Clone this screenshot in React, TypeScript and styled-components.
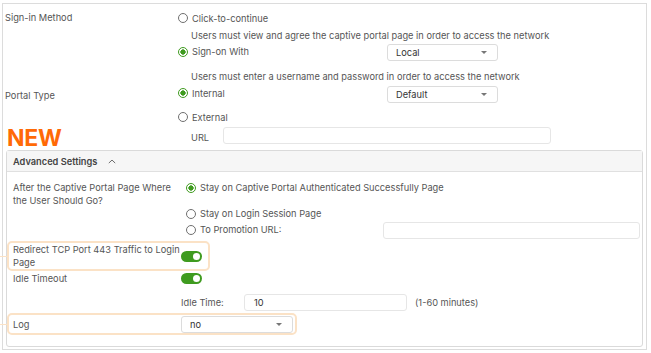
import React from "react";
import styled, { createGlobalStyle } from "styled-components";

const GlobalStyle = createGlobalStyle`
  html, body {
    margin: 0;
    padding: 0;
    background: #fff;
  }
  body {
    font-family: Inter, "Noto Sans", "Liberation Sans", sans-serif;
    font-size: 9.25px;
    color: #555;
  }
`;

const PEACH = "#fbe2c6";
const GREEN = "#3f9b1f";

const Radio: React.FC<{ checked?: boolean; label: string }> = ({ checked, label }) => (
  <RadioWrap>
    <RadioDot $checked={!!checked} />
    <span>{label}</span>
  </RadioWrap>
);

const Select: React.FC<{ value: string; width: number }> = ({ value, width }) => (
  <SelectBox style={{ width }}>
    <span>{value}</span>
    <Caret />
  </SelectBox>
);

const App: React.FC = () => {
  return (
    <>
      <GlobalStyle />
      <Frame>
        <Field>
          <Label $pt={0} $lh={18}>
            Sign-in Method
          </Label>
          <Stack>
            <Line $h={18}>
              <Radio label="Click-to-continue" />
            </Line>
            <Line $h={16}>
              <Hint>Users must view and agree the captive portal page in order to access the network</Hint>
            </Line>
            <Line $h={19}>
              <RadioCell>
                <Radio checked label="Sign-on With" />
              </RadioCell>
              <Select value="Local" width={111} />
            </Line>
            <Line $h={18} $mt={5}>
              <Hint>Users must enter a username and password in order to access the network</Hint>
            </Line>
          </Stack>
        </Field>

        <Field>
          <LabelCol>
            <Label $pt={4} $lh={14}>
              Portal Type
            </Label>
            <NewTag>NEW</NewTag>
          </LabelCol>
          <Stack $pb={7}>
            <Line $h={18}>
              <RadioCell>
                <Radio checked label="Internal" />
              </RadioCell>
              <Select value="Default" width={111} />
            </Line>
            <Line $h={18} $mt={5}>
              <Radio label="External" />
            </Line>
            <Line $h={16} $mt={1}>
              <UrlLabel>URL</UrlLabel>
              <TextInput style={{ width: 328 }} />
            </Line>
          </Stack>
        </Field>

        <Panel>
          <PanelHeader>
            <span>Advanced Settings</span>
            <Chevron viewBox="0 0 10 6">
              <path d="M1 5 L5 1.2 L9 5" fill="none" stroke="#666" strokeWidth="1.2" />
            </Chevron>
          </PanelHeader>
          <PanelBody>
            <Row $pt={5}>
              <RowLabel $lh={13} $pt={2}>
                After the Captive Portal Page Where the User Should Go?
              </RowLabel>
              <Stack>
                <Line $h={17} $ml={5}>
                  <Radio checked label="Stay on Captive Portal Authenticated Successfully Page" />
                </Line>
                <Line $h={17} $ml={5} $mt={9}>
                  <Radio label="Stay on Login Session Page" />
                </Line>
                <Line $h={17} $ml={5}>
                  <PromoCell>
                    <Radio label="To Promotion URL:" />
                  </PromoCell>
                  <TextInput style={{ flex: 1 }} />
                </Line>
              </Stack>
            </Row>

            <Row $hl $fit $pr={6} $center>
              <RowLabel $lh={13}>Redirect TCP Port 443 Traffic to Login Page</RowLabel>
              <Toggle />
            </Row>

            <Row>
              <RowLabel $lh={11}>Idle Timeout</RowLabel>
              <Stack>
                <Line $h={11}>
                  <Toggle />
                </Line>
                <Line $h={17} $mt={10}>
                  <IdleLabel>Idle Time:</IdleLabel>
                  <TextInput style={{ width: 163 }}>
                    <span>10</span>
                  </TextInput>
                  <Unit>(1-60 minutes)</Unit>
                </Line>
              </Stack>
            </Row>

            <Row $hl $fit $pr={2} $center $pt={1}>
              <RowLabel $lh={13}>Log</RowLabel>
              <Select value="no" width={112} />
            </Row>
          </PanelBody>
        </Panel>
      </Frame>
    </>
  );
};

export default App;

const Frame = styled.div`
  margin: 3px 4px 2px 2px;
  height: 347px;
  box-sizing: border-box;
  border: 1px solid #dcdcdc;
  padding: 5px 3px 0 0;
`;

const Field = styled.div`
  display: grid;
  grid-template-columns: 175px 1fr;
`;

const LabelCol = styled.div`
  display: flex;
  flex-direction: column;
  justify-content: space-between;
`;

const Label = styled.div<{ $pt: number; $lh: number }>`
  padding: ${(p) => p.$pt}px 0 0 2px;
  line-height: ${(p) => p.$lh}px;
  color: #555;
`;

const NewTag = styled.div`
  font-family: Inter, "Liberation Sans", sans-serif;
  font-weight: 700;
  font-size: 23px;
  line-height: 23px;
  color: #ff6a06;
  padding-left: 4px;
  letter-spacing: -0.3px;
`;

const Stack = styled.div<{ $pb?: number }>`
  display: flex;
  flex-direction: column;
  padding-bottom: ${(p) => p.$pb ?? 0}px;
`;

const Line = styled.div<{ $h: number; $mt?: number; $ml?: number }>`
  display: flex;
  align-items: center;
  height: ${(p) => p.$h}px;
  margin-top: ${(p) => p.$mt ?? 0}px;
  margin-left: ${(p) => p.$ml ?? 0}px;
`;

const RadioWrap = styled.label`
  display: inline-flex;
  align-items: center;
  gap: 4px;
  color: #555;
  white-space: nowrap;
`;

const RadioDot = styled.span<{ $checked: boolean }>`
  width: 10px;
  height: 10px;
  border-radius: 50%;
  box-sizing: border-box;
  border: 1px solid ${(p) => (p.$checked ? GREEN : "#6f6f6f")};
  background: ${(p) => (p.$checked ? `radial-gradient(circle, ${GREEN} 0 2.4px, #fff 2.9px)` : "#fff")};
  flex: none;
`;

const Hint = styled.span`
  padding-left: 13px;
  white-space: nowrap;
`;

const RadioCell = styled.div`
  width: 209px;
`;

const PromoCell = styled.div`
  width: 197px;
`;

const SelectBox = styled.div`
  height: 17px;
  box-sizing: border-box;
  border: 1px solid #dcdcdc;
  border-radius: 3px;
  background: #fff;
  display: flex;
  align-items: center;
  justify-content: space-between;
  padding: 0 10px 0 8px;
  color: #333;
`;

const Caret = styled.span`
  width: 0;
  height: 0;
  border-left: 3.5px solid transparent;
  border-right: 3.5px solid transparent;
  border-top: 3.5px solid #777;
`;

const UrlLabel = styled.span`
  width: 32px;
  padding-left: 13px;
  padding-top: 4px;
`;

const TextInput = styled.div`
  height: 17px;
  box-sizing: border-box;
  border: 1px solid #e6e6e6;
  border-radius: 3px;
  background: #fff;
  display: flex;
  align-items: center;
  padding-left: 9px;
  color: #333;
`;

const Panel = styled.div`
  margin: 0 0 0 3px;
  border: 1px solid #dadada;
  border-radius: 3px;
  height: 197px;
  box-sizing: border-box;
`;

const PanelHeader = styled.div`
  height: 21px;
  box-sizing: border-box;
  background: #f6f6f6;
  border-bottom: 1px solid #e0e0e0;
  display: flex;
  align-items: center;
  gap: 11px;
  padding-left: 6px;
  font-weight: 600;
  color: #444;
`;

const Chevron = styled.svg`
  width: 8px;
  height: 5px;
`;

const PanelBody = styled.div`
  display: flex;
  flex-direction: column;
`;

const Row = styled.div<{ $hl?: boolean; $fit?: boolean; $pr?: number; $center?: boolean; $pt?: number }>`
  position: relative;
  display: grid;
  grid-template-columns: 168px auto;
  align-items: ${(p) => (p.$center ? "center" : "start")};
  width: ${(p) => (p.$fit ? "fit-content" : "auto")};
  box-sizing: border-box;
  border: 2px solid ${(p) => (p.$hl ? PEACH : "transparent")};
  border-radius: 5px;
  padding: ${(p) => p.$pt ?? 0}px ${(p) => p.$pr ?? 0}px 0 4px;

  &::before {
    content: "";
    display: ${(p) => (p.$hl ? "block" : "none")};
    position: absolute;
    left: -9px;
    top: 50%;
    width: 7px;
    height: 1px;
    background: ${PEACH};
  }
`;

const RowLabel = styled.div<{ $lh: number; $pt?: number }>`
  line-height: ${(p) => p.$lh}px;
  padding-top: ${(p) => p.$pt ?? 0}px;
  margin-right: -3px;
`;

const Toggle = styled.span`
  display: inline-block;
  width: 21px;
  height: 11px;
  border-radius: 6px;
  background: ${GREEN};
  position: relative;

  &::after {
    content: "";
    position: absolute;
    right: 2px;
    top: 2px;
    width: 7px;
    height: 7px;
    border-radius: 50%;
    background: #fff;
  }
`;

const IdleLabel = styled.span`
  width: 63px;
`;

const Unit = styled.span`
  margin-left: 8px;
`;
